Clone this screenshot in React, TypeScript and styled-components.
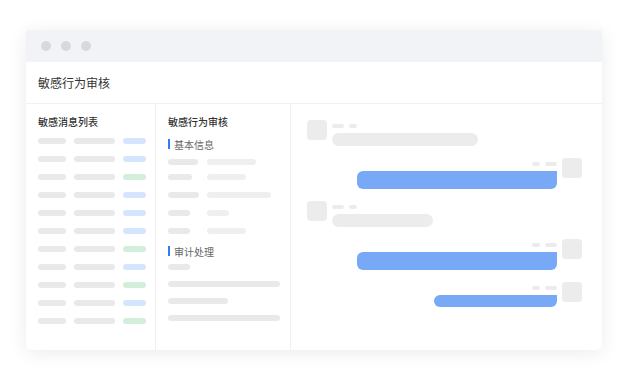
import styled, { createGlobalStyle } from 'styled-components';

const GlobalStyle = createGlobalStyle`
  html, body {
    margin: 0;
    padding: 0;
    background: #ffffff;
    font-family: "Noto Sans CJK SC", "Noto Sans", sans-serif;
  }
`;

type Tone = 'gray' | 'light' | 'blue' | 'green';

const toneColor: Record<Tone, string> = {
  gray: '#e9e9e9',
  light: '#efefef',
  blue: '#d5e5fd',
  green: '#d3efdc',
};

const listRows: Tone[] = [
  'blue',
  'blue',
  'green',
  'blue',
  'blue',
  'blue',
  'green',
  'blue',
  'green',
  'blue',
  'green',
];

const baseFields = [
  { label: 30, value: 49 },
  { label: 24, value: 39 },
  { label: 31, value: 64 },
  { label: 22, value: 22 },
  { label: 22, value: 39 },
];

const messages = [
  { side: 'left', width: 146, tall: false },
  { side: 'right', width: 200, tall: true },
  { side: 'left', width: 101, tall: false },
  { side: 'right', width: 200, tall: true },
  { side: 'right', width: 123, tall: false },
] as const;

const App = () => {
  return (
    <>
      <GlobalStyle />
      <Page>
        <Window>
          <TitleBar>
            <Dot />
            <Dot />
            <Dot />
          </TitleBar>
          <Header>敏感行为审核</Header>
          <Body>
            <ListColumn>
              <ColumnTitle>敏感消息列表</ColumnTitle>
              <List>
                {listRows.map((tone, i) => (
                  <ListRow key={i}>
                    <Bar $w={28} $tone="gray" />
                    <Bar $w={41} $tone="gray" />
                    <Bar $w={23} $tone={tone} />
                  </ListRow>
                ))}
              </List>
            </ListColumn>

            <DetailColumn>
              <ColumnTitle>敏感行为审核</ColumnTitle>
              <SectionTitle>基本信息</SectionTitle>
              <Fields>
                {baseFields.map((f, i) => (
                  <FieldRow key={i} $tight={i === 0}>
                    <Bar $w={f.label} $tone="gray" />
                    <Bar $w={f.value} $tone="light" />
                  </FieldRow>
                ))}
              </Fields>
              <SectionTitle $spaced>审计处理</SectionTitle>
              <AuditFields>
                <Bar $w={22} $tone="gray" />
                <Bar $w={112} $tone="gray" />
                <Bar $w={60} $tone="gray" />
                <Bar $w={112} $tone="gray" />
              </AuditFields>
            </DetailColumn>

            <ChatColumn>
              {messages.map((m, i) => (
                <Message key={i} $side={m.side}>
                  <Avatar />
                  <MessageBody $side={m.side}>
                    <Meta $side={m.side}>
                      <MetaTag $w={12} />
                      <MetaTag $w={8} />
                    </Meta>
                    <Bubble $side={m.side} $w={m.width} $tall={m.tall} />
                  </MessageBody>
                </Message>
              ))}
            </ChatColumn>
          </Body>
        </Window>
      </Page>
    </>
  );
};

export default App;

const Page = styled.div`
  width: 636px;
  height: 380px;
  padding: 30px 0 0 26px;
  box-sizing: border-box;
`;

const Window = styled.div`
  width: 576px;
  height: 320px;
  background: #ffffff;
  border-radius: 3px 3px 6px 6px;
  box-shadow: 0 3px 18px rgba(30, 40, 80, 0.09);
  display: flex;
  flex-direction: column;
  overflow: hidden;
`;

const TitleBar = styled.div`
  height: 32px;
  flex-shrink: 0;
  background: #f2f3f7;
  display: flex;
  align-items: center;
  gap: 10px;
  padding-left: 15px;
`;

const Dot = styled.span`
  width: 10px;
  height: 10px;
  border-radius: 50%;
  background: #d9d9dc;
`;

const Header = styled.div`
  height: 41px;
  flex-shrink: 0;
  display: flex;
  align-items: center;
  padding-left: 12px;
  font-size: 12px;
  color: #333333;
  border-bottom: 1px solid #f1f1f3;
`;

const Body = styled.div`
  flex: 1;
  display: flex;
  min-height: 0;
`;

const Column = styled.div`
  display: flex;
  flex-direction: column;
  padding: 11px 0 0 12px;
  box-sizing: border-box;
`;

const ListColumn = styled(Column)`
  width: 130px;
  border-right: 1px solid #f1f1f3;
`;

const DetailColumn = styled(Column)`
  width: 135px;
  border-right: 1px solid #f1f1f3;
`;

const ColumnTitle = styled.div`
  font-size: 10px;
  line-height: 14px;
  font-weight: 500;
  color: #333333;
`;

const List = styled.div`
  display: flex;
  flex-direction: column;
  margin-top: 3px;
`;

const ListRow = styled.div`
  height: 18px;
  display: flex;
  align-items: center;
  gap: 8px;
`;

const Bar = styled.span<{ $w: number; $tone: Tone }>`
  display: block;
  width: ${({ $w }) => $w}px;
  height: 6px;
  border-radius: 3px;
  background: ${({ $tone }) => toneColor[$tone]};
  flex-shrink: 0;
`;

const SectionTitle = styled.div<{ $spaced?: boolean }>`
  margin-top: ${({ $spaced }) => ($spaced ? '10px' : '8px')};
  height: 14px;
  display: flex;
  align-items: center;
  font-size: 10px;
  color: #666666;
  &::before {
    content: '';
    width: 2px;
    height: 10px;
    background: #2f7cf6;
    margin-right: 4px;
  }
`;

const Fields = styled.div`
  display: flex;
  flex-direction: column;
  margin-top: 8px;
  gap: 12px;
`;

const FieldRow = styled.div<{ $tight?: boolean }>`
  display: grid;
  grid-template-columns: 39px auto;
  margin-bottom: ${({ $tight }) => ($tight ? '-3px' : '0')};
`;

const AuditFields = styled.div`
  display: flex;
  flex-direction: column;
  gap: 11px;
  margin-top: 6px;
`;

const ChatColumn = styled.div`
  flex: 1;
  display: flex;
  flex-direction: column;
  gap: 12px;
  padding: 16px 20px 0 16px;
`;

const Message = styled.div<{ $side: 'left' | 'right' }>`
  display: flex;
  flex-direction: ${({ $side }) => ($side === 'left' ? 'row' : 'row-reverse')};
  gap: 5px;
`;

const Avatar = styled.div`
  width: 20px;
  height: 20px;
  border-radius: 4px;
  background: #ececec;
  flex-shrink: 0;
`;

const MessageBody = styled.div<{ $side: 'left' | 'right' }>`
  display: flex;
  flex-direction: column;
  align-items: ${({ $side }) => ($side === 'left' ? 'flex-start' : 'flex-end')};
  padding-top: 4px;
  gap: 5px;
`;

const Meta = styled.div<{ $side: 'left' | 'right' }>`
  display: flex;
  flex-direction: ${({ $side }) => ($side === 'left' ? 'row' : 'row-reverse')};
  gap: 5px;
`;

const MetaTag = styled.span<{ $w: number }>`
  width: ${({ $w }) => $w}px;
  height: 4px;
  border-radius: 2px;
  background: #ececec;
`;

const Bubble = styled.div<{ $side: 'left' | 'right'; $w: number; $tall: boolean }>`
  width: ${({ $w }) => $w}px;
  height: ${({ $tall, $side }) => ($tall ? 18 : $side === 'left' ? 13 : 12)}px;
  border-radius: ${({ $side }) => ($side === 'left' ? '7px' : '6px 0 6px 6px')};
  background: ${({ $side }) => ($side === 'left' ? '#ececec' : '#77a9f6')};
`;
